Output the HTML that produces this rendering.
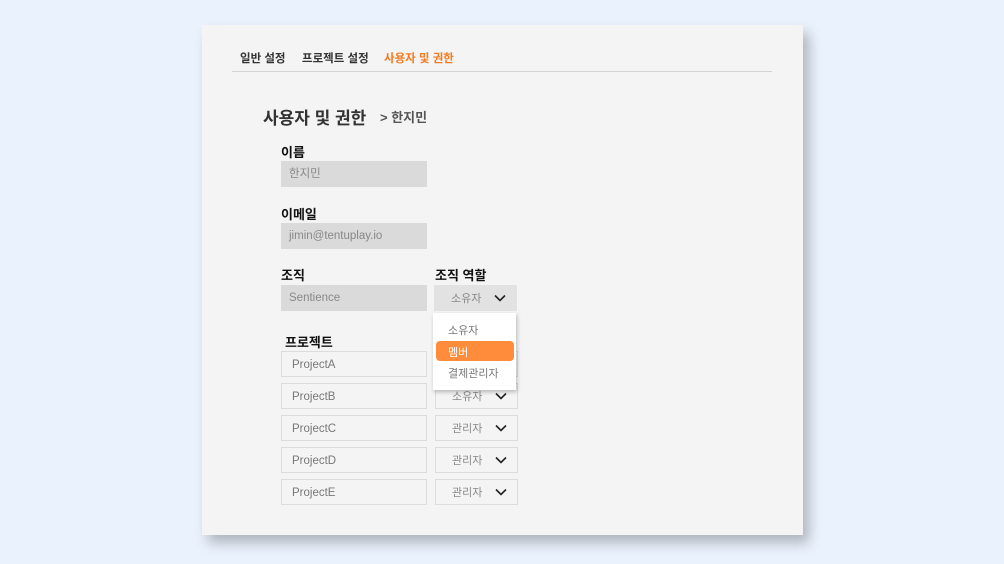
<!DOCTYPE html>
<html><head><meta charset="utf-8"><style>
*{margin:0;padding:0;box-sizing:border-box}
body{width:1004px;height:564px;background:#eaf2fd;font-family:"Liberation Sans","Noto Sans CJK KR",sans-serif;position:relative;overflow:hidden}
.card{position:absolute;left:202px;top:25px;width:601px;height:510px;background:#f4f4f4;box-shadow:6px 8px 12px rgba(0,0,0,.25)}
.a{position:absolute;white-space:nowrap}
.tab{font-size:11.5px;font-weight:bold;color:#333;top:50px}
.lbl{font-size:13px;font-weight:bold;color:#111}
.inp{position:absolute;background:#dadada;color:#888;font-size:11.5px;padding-left:8px;line-height:27px;height:26px}
.box{position:absolute;border:1px solid #dcdcdc;color:#777;font-size:11.5px;padding-left:10px;line-height:26px;height:26px;background:#f4f4f4}
.sel{position:absolute;border:1px solid #dcdcdc;color:#888;font-size:11px;height:26px;width:83px;background:#f4f4f4}
.sel span{position:absolute;left:16px;top:4px}
.sel svg{position:absolute;right:10px;top:8px}
</style></head><body>
<div class="card"></div>
<div class="a tab" style="left:240px">일반 설정</div>
<div class="a tab" style="left:302px">프로젝트 설정</div>
<div class="a tab" style="left:384px;color:#f47a20">사용자 및 권한</div>
<div class="a" style="left:232px;top:71px;width:540px;height:1px;background:#d4d4d4"></div>
<div class="a" style="left:263px;top:104px;font-size:17px;font-weight:bold;color:#333">사용자 및 권한</div>
<div class="a" style="left:380px;top:107px;font-size:13px;font-weight:bold;color:#555">&gt; 한지민</div>
<div class="a lbl" style="left:281px;top:142px">이름</div>
<div class="inp" style="left:281px;top:161px;width:146px">한지민</div>
<div class="a lbl" style="left:281px;top:204px">이메일</div>
<div class="inp" style="left:281px;top:223px;width:146px">jimin@tentuplay.io</div>
<div class="a lbl" style="left:281px;top:265px">조직</div>
<div class="a lbl" style="left:435px;top:265px">조직 역할</div>
<div class="inp" style="left:281px;top:285px;width:146px">Sentience</div>
<div class="sel" style="left:434px;top:285px;background:#e2e2e2;border-color:#e2e2e2"><span>소유자</span><svg width="12" height="8" viewBox="0 0 12 8"><path d="M1 1.5 6 6.5 11 1.5" fill="none" stroke="#222" stroke-width="1.6"/></svg></div>
<div class="a lbl" style="left:285px;top:332px">프로젝트</div>
<div class="box" style="left:281px;top:351px;width:146px">ProjectA</div>
<div class="box" style="left:281px;top:383px;width:146px">ProjectB</div>
<div class="box" style="left:281px;top:415px;width:146px">ProjectC</div>
<div class="box" style="left:281px;top:447px;width:146px">ProjectD</div>
<div class="box" style="left:281px;top:479px;width:146px">ProjectE</div>
<div class="sel" style="left:435px;top:351px"><span>소유자</span></div>
<div class="sel" style="left:435px;top:383px"><span>소유자</span><svg width="12" height="8" viewBox="0 0 12 8"><path d="M1 1.5 6 6.5 11 1.5" fill="none" stroke="#222" stroke-width="1.6"/></svg></div>
<div class="sel" style="left:435px;top:415px"><span>관리자</span><svg width="12" height="8" viewBox="0 0 12 8"><path d="M1 1.5 6 6.5 11 1.5" fill="none" stroke="#222" stroke-width="1.6"/></svg></div>
<div class="sel" style="left:435px;top:447px"><span>관리자</span><svg width="12" height="8" viewBox="0 0 12 8"><path d="M1 1.5 6 6.5 11 1.5" fill="none" stroke="#222" stroke-width="1.6"/></svg></div>
<div class="sel" style="left:435px;top:479px"><span>관리자</span><svg width="12" height="8" viewBox="0 0 12 8"><path d="M1 1.5 6 6.5 11 1.5" fill="none" stroke="#222" stroke-width="1.6"/></svg></div>
<div class="a" style="left:433px;top:313px;width:83px;height:77px;background:#fff;box-shadow:1px 2px 4px rgba(0,0,0,.25)"></div>
<div class="a" style="left:448px;top:322px;font-size:11px;color:#777">소유자</div>
<div class="a" style="left:436px;top:341px;width:78px;height:20px;background:#ff8c3a;border-radius:4px"></div>
<div class="a" style="left:448px;top:344px;font-size:11px;color:#fff">멤버</div>
<div class="a" style="left:448px;top:365px;font-size:11px;color:#777">결제관리자</div>
</body></html>
